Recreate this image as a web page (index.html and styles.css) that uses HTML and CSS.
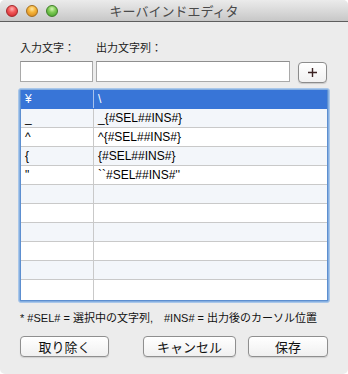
FILE: index.html
```html
<!DOCTYPE html>
<html lang="ja">
<head>
<meta charset="utf-8">
<title>キーバインドエディタ</title>
<link rel="stylesheet" href="styles.css">
</head>
<body>
<div class="window">
  <div class="titlebar">
    <div class="lights">
      <span class="light red"></span>
      <span class="light orange"></span>
      <span class="light green"></span>
    </div>
    <div class="title">キーバインドエディタ</div>
  </div>
  <div class="content">
    <div class="form">
      <div class="label">入力文字：</div>
      <div class="label">出力文字列：</div>
      <div></div>
      <div class="field"></div>
      <div class="field"></div>
      <button class="plus">
        <svg width="11" height="11" viewBox="0 0 11 11"><path d="M5.5 1v9M1 5.5h9" stroke="#3b2222" stroke-width="1.4" fill="none"/></svg>
      </button>
    </div>
    <div class="tablewrap">
      <div class="table">
        <div class="row sel"><div class="c1">¥</div><div class="c2">\</div></div>
        <div class="row alt"><div class="c1">_</div><div class="c2">_{#SEL##INS#}</div></div>
        <div class="row"><div class="c1">^</div><div class="c2">^{#SEL##INS#}</div></div>
        <div class="row alt"><div class="c1">{</div><div class="c2">{#SEL##INS#}</div></div>
        <div class="row"><div class="c1">"</div><div class="c2">``#SEL##INS#''</div></div>
        <div class="row alt"><div class="c1"></div><div class="c2"></div></div>
        <div class="row"><div class="c1"></div><div class="c2"></div></div>
        <div class="row alt"><div class="c1"></div><div class="c2"></div></div>
        <div class="row"><div class="c1"></div><div class="c2"></div></div>
        <div class="row alt"><div class="c1"></div><div class="c2"></div></div>
        <div class="row last"><div class="c1"></div><div class="c2"></div></div>
      </div>
    </div>
    <div class="note">* #SEL# = 選択中の文字列,　#INS# = 出力後のカーソル位置</div>
    <div class="buttons">
      <button class="btn remove">取り除く</button>
      <button class="btn cancel">キャンセル</button>
      <button class="btn save">保存</button>
    </div>
  </div>
</div>
</body>
</html>
```

FILE: styles.css
```css
html, body {
  margin: 0;
  padding: 0;
  background: #ffffff;
}
body {
  width: 348px;
  height: 374px;
  overflow: hidden;
  font-family: "Noto Sans CJK JP", "Liberation Sans", sans-serif;
}
.window {
  width: 348px;
  height: 374px;
  background: #ececec;
  border-radius: 5px;
  overflow: hidden;
}
.titlebar {
  height: 21px;
  border-bottom: 1px solid #5e5e5e;
  background: linear-gradient(#ebebeb, #d6d6d6 60%, #c7c7c7);
  display: flex;
  align-items: center;
  position: relative;
}
.lights {
  display: flex;
  gap: 8px;
  padding-left: 6px;
  position: relative;
  z-index: 1;
}
.light {
  width: 12px;
  height: 12px;
  border-radius: 50%;
  box-sizing: border-box;
}
.red {
  background: radial-gradient(circle at 50% 30%, #ffb3b3 0, #f2595a 40%, #c81f24 100%);
  border: 1px solid #a3272a;
}
.orange {
  background: radial-gradient(circle at 50% 30%, #ffe7a3 0, #f5b53a 40%, #d0801c 100%);
  border: 1px solid #a56e1d;
}
.green {
  background: radial-gradient(circle at 50% 30%, #d4f4b5 0, #7fcb55 40%, #3d9a27 100%);
  border: 1px solid #3f7e28;
}
.title {
  position: absolute;
  left: 0;
  right: 0;
  top: 0;
  height: 21px;
  line-height: 21px;
  text-align: center;
  font-size: 13px;
  color: #4a4a4a;
}
.content {
  padding: 0 20px 0 20px;
}
.form {
  display: grid;
  grid-template-columns: 73px 194px 29px;
  column-gap: 3px;
  grid-template-rows: 12px 21px;
  row-gap: 8px;
  padding-top: 19px;
  align-items: center;
}
.form > :nth-child(3n) {
  margin-left: 5px;
}
.label {
  font-size: 11px;
  line-height: 12px;
  color: #222;
  white-space: nowrap;
}
.field {
  height: 21px;
  box-sizing: border-box;
  background: #fff;
  border: 1px solid #a9a9a9;
  border-top-color: #8f8f8f;
}
.plus {
  width: 29px;
  height: 21px;
  margin: 1px 0 0 5px;
  padding: 0;
  box-sizing: border-box;
  border: 1px solid #8c8c8c;
  border-radius: 4px;
  background: linear-gradient(#ffffff, #f1f1f1);
  box-shadow: 0 1px 1px rgba(0,0,0,0.15);
  display: flex;
  align-items: center;
  justify-content: center;
}
.tablewrap {
  margin: 6px 0 0 -2px;
  width: 312px;
  box-sizing: border-box;
  border: 1px solid #a9c7ea;
  border-radius: 3px;
  padding: 1px;
  background: #86afe0;
}
.table {
  background: #fff;
  border: 1px solid #5d8fd0;
  border-top: none;
}
.row {
  display: grid;
  grid-template-columns: 73px 1fr;
  height: 19px;
  box-sizing: border-box;
  border-bottom: 1px solid #c9c9c9;
  font-family: "Liberation Sans", "Noto Sans CJK JP", sans-serif;
  font-size: 12px;
  color: #000;
}
.row.last {
  border-bottom: none;
  height: 20px;
}
.row.alt {
  background: #f3f6fa;
}
.row.sel {
  background: #3875d7;
  color: #fff;
  border-bottom-color: #3875d7;
}
.c1, .c2 {
  line-height: 18px;
  padding-left: 4px;
  white-space: nowrap;
}
.c1 {
  border-right: 1px solid #c9c9c9;
}
.row.sel .c1 {
  border-right-color: #a8c3ec;
}
.note {
  margin-top: 8px;
  font-family: "Liberation Sans", "Noto Sans CJK JP", sans-serif;
  font-size: 11px;
  line-height: 14px;
  color: #111;
  white-space: nowrap;
}
.buttons {
  display: flex;
  margin-top: 11px;
}
.btn {
  height: 21px;
  box-sizing: border-box;
  padding: 0;
  border: 1px solid #8f8f8f;
  border-radius: 4px;
  background: linear-gradient(#ffffff, #f0f0f0);
  box-shadow: 0 1px 1px rgba(0,0,0,0.12);
  font-family: "Noto Sans CJK JP", sans-serif;
  font-size: 13px;
  line-height: 19px;
  color: #111;
}
.remove {
  width: 89px;
}
.cancel {
  width: 93px;
  margin-left: 34px;
}
.save {
  width: 80px;
  margin-left: 12px;
}
```
